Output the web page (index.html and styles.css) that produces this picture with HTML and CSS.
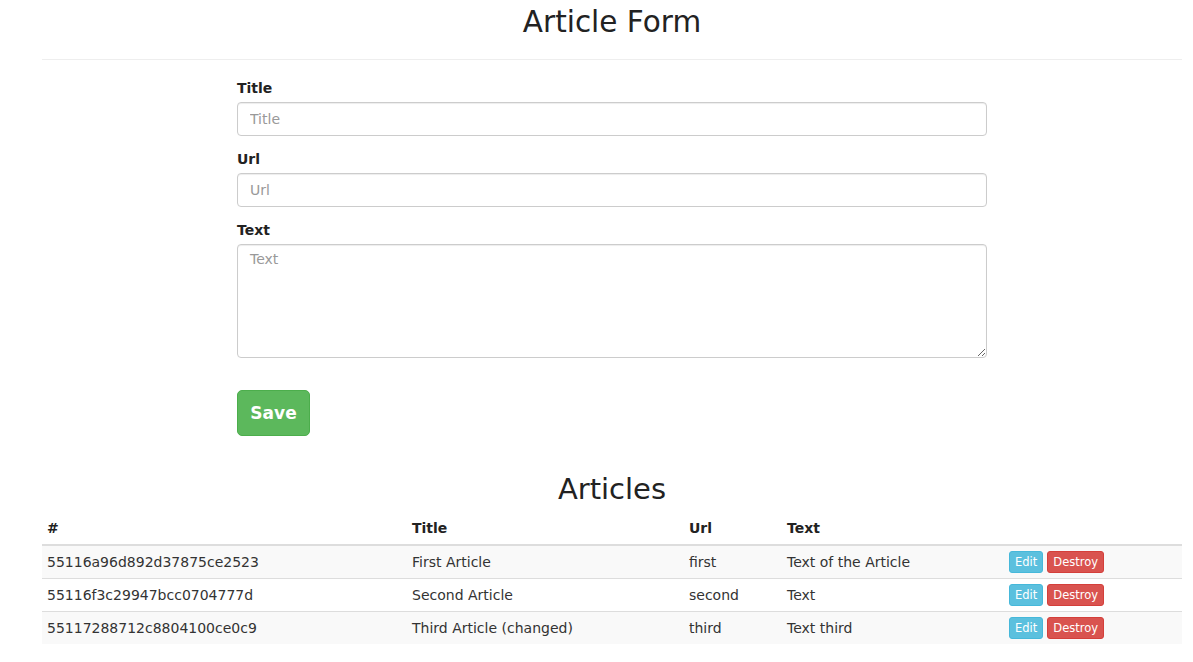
FILE: index.html
```html
<!DOCTYPE html>
<html>
<head>
<meta charset="utf-8">
<link rel="stylesheet" href="styles.css">
</head>
<body>
<div class="container">
  <div class="page-header"><h1>Article Form</h1></div>
  <form class="form">
    <div class="form-group">
      <label>Title</label>
      <input class="form-control" type="text" placeholder="Title">
    </div>
    <div class="form-group">
      <label>Url</label>
      <input class="form-control" type="text" placeholder="Url">
    </div>
    <div class="form-group">
      <label>Text</label>
      <textarea class="form-control area" placeholder="Text"></textarea>
    </div>
    <button type="button" class="btn-save">Save</button>
  </form>
  <h2 class="list-title">Articles</h2>
  <table class="table">
    <thead>
      <tr><th class="c-id">#</th><th class="c-title">Title</th><th class="c-url">Url</th><th class="c-text">Text</th><th></th></tr>
    </thead>
    <tbody>
      <tr class="odd"><td>55116a96d892d37875ce2523</td><td>First Article</td><td>first</td><td>Text of the Article</td><td class="act"><div class="actions"><span class="btn edit">Edit</span><span class="btn destroy">Destroy</span></div></td></tr>
      <tr><td>55116f3c29947bcc0704777d</td><td>Second Article</td><td>second</td><td>Text</td><td class="act"><div class="actions"><span class="btn edit">Edit</span><span class="btn destroy">Destroy</span></div></td></tr>
      <tr class="odd"><td>55117288712c8804100ce0c9</td><td>Third Article (changed)</td><td>third</td><td>Text third</td><td class="act"><div class="actions"><span class="btn edit">Edit</span><span class="btn destroy">Destroy</span></div></td></tr>
    </tbody>
  </table>
</div>
</body>
</html>
```
FILE: styles.css
```css
html, body {
  margin: 0;
  padding: 0;
  background: #fff;
  overflow: hidden;
}
body {
  font-family: "DejaVu Sans", sans-serif;
  font-size: 14px;
  color: #333;
}
.container {
  width: 1140px;
  margin-left: 42px;
}
.page-header {
  border-bottom: 1px solid #eee;
  padding: 4px 0 19px;
}
.page-header h1 {
  margin: 0;
  font-size: 29.5px;
  font-weight: normal;
  line-height: 36px;
  text-align: center;
  color: #222;
}
.form {
  width: 750px;
  margin: 18px 0 0 195px;
}
.form-group {
  margin-bottom: 13px;
}
.form-group label {
  display: block;
  font-weight: bold;
  font-size: 14px;
  line-height: 20px;
  margin-bottom: 4px;
  color: #222;
}
.form-control {
  display: block;
  box-sizing: border-box;
  width: 750px;
  height: 34px;
  padding: 6px 12px;
  font-family: inherit;
  font-size: 14px;
  color: #555;
  border: 1px solid #ccc;
  border-radius: 4px;
  box-shadow: inset 0 1px 1px rgba(0,0,0,.075);
  margin: 0;
}
.form-control::placeholder { color: #999; }
.area {
  height: 114px;
  resize: vertical;
}
.btn-save {
  display: block;
  margin-top: 32px;
  width: 73px;
  height: 46px;
  background: #5cb85c;
  border: 1px solid #4cae4c;
  border-radius: 5px;
  color: #fff;
  font-family: inherit;
  font-weight: bold;
  font-size: 17px;
  padding: 0;
}
.list-title {
  margin: 36px 0 0;
  text-align: center;
  font-weight: normal;
  font-size: 29px;
  line-height: 34px;
  color: #222;
}
.table {
  width: 1140px;
  border-collapse: collapse;
  margin-top: 6px;
}
.table th {
  text-align: left;
  font-weight: bold;
  padding: 8px 5px 7px;
  line-height: 17px;
  border-bottom: 2px solid #ddd;
  color: #222;
}
.table td {
  padding: 7px 5px 7px;
  line-height: 18px;
  border-top: 1px solid #ddd;
  white-space: nowrap;
}
.table td.act {
  padding: 5px 5px;
}
.table tbody tr.odd { background: #f9f9f9; }
.c-id { width: 355px; }
.c-title { width: 267px; }
.c-url { width: 88px; }
.c-text { width: 212px; }
.actions {
  display: flex;
  gap: 4px;
}
.btn {
  display: block;
  padding: 1px 5px;
  font-size: 11.5px;
  line-height: 18px;
  border-radius: 3px;
  color: #fff;
}
.edit {
  background: #5bc0de;
  border: 1px solid #46b8da;
}
.destroy {
  background: #d9534f;
  border: 1px solid #d43f3a;
}
```
